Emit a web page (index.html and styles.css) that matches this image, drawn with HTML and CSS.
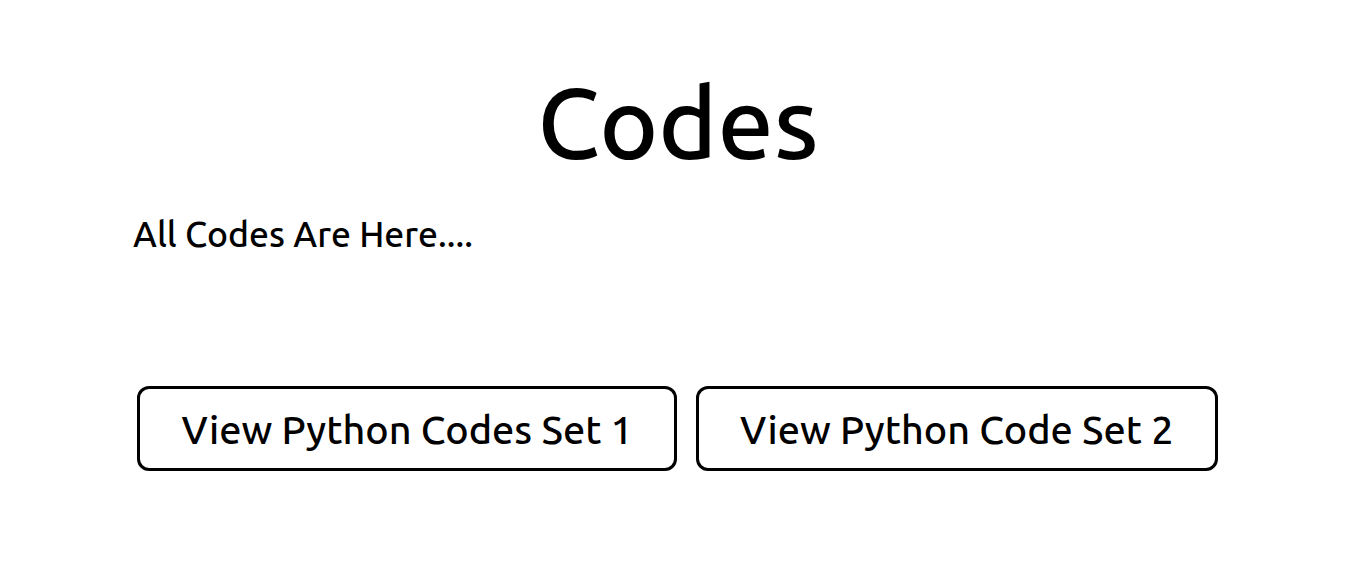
FILE: index.html
```html
<!DOCTYPE html>
<html>
<head>
<meta charset="utf-8">
<link rel="stylesheet" href="styles.css">
</head>
<body>
<main class="page">
  <h1 class="title">Codes</h1>
  <p class="intro">All Codes Are Here....</p>
  <div class="actions">
    <button class="btn">View Python Codes Set 1</button>
    <button class="btn">View Python Code Set 2</button>
  </div>
</main>
</body>
</html>
```
FILE: styles.css
```css
html, body {
  margin: 0;
  padding: 0;
  background: #fff;
}
.page {
  font-family: "Ubuntu", "Open Sans", sans-serif;
  color: #000;
  padding: 0 128px 0 133px;
}
.title {
  margin: 0;
  padding: 62px 0 0 1px;
  text-align: center;
  font-size: 100px;
  font-weight: 500;
  line-height: 120px;
}
.intro {
  margin: 32px 0 0;
  font-size: 35.5px;
  font-weight: 500;
  line-height: 40px;
}
.actions {
  display: flex;
  justify-content: center;
  gap: 19px;
  margin-top: 132px;
}
.btn {
  flex-shrink: 0;
  white-space: nowrap;
  font-family: inherit;
  font-size: 39.6px;
  font-weight: 500;
  background: #fff;
  color: #000;
  border: 3px solid #000;
  border-radius: 12px;
  padding: 0 41px;
  height: 85px;
  cursor: pointer;
}
```
